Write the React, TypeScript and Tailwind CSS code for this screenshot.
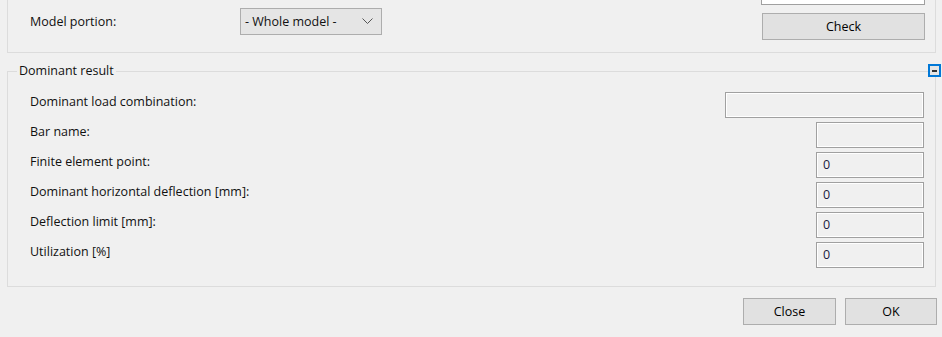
import React from 'react';

const font = { fontFamily: '"Open Sans", "Noto Sans", Arial, sans-serif' };

const Field = ({ value = '', className = '' }: { value?: string; className?: string }) => (
  <div
    className={`h-[26px] border border-[#a0a0a0] bg-[#f0f0f0] shadow-[inset_1px_1px_0_#ffffff,inset_-1px_-1px_0_#ffffff] pl-[6px] pt-[1px] flex items-center text-[#1a1a40] ${className}`}
  >
    {value}
  </div>
);

const Button = ({ children, className = '' }: { children: React.ReactNode; className?: string }) => (
  <button
    className={`h-[27px] border border-[#adadad] bg-[#e1e1e1] text-black pt-[2px] flex items-center justify-center ${className}`}
  >
    {children}
  </button>
);

const rows = [
  { label: 'Dominant load combination:', value: '', wide: true },
  { label: 'Bar name:', value: '' },
  { label: 'Finite element point:', value: '0' },
  { label: 'Dominant horizontal deflection [mm]:', value: '0' },
  { label: 'Deflection limit [mm]:', value: '0' },
  { label: 'Utilization [%]', value: '0' },
];

export default function App() {
  return (
    <div className="w-[942px] h-[337px] bg-[#f0f0f0] overflow-hidden text-[12.5px] text-[#111]" style={font}>
      {/* model portion group (top cut off) */}
      <div className="ml-[7px] w-[929px] h-[53px] border-x border-b border-[#dcdcdc] flex">
        <div className="flex items-start pt-[8px] pl-[22px]">
          <span className="w-[210px] leading-[16px] mt-[6px]">Model portion:</span>
          <div className="w-[142px] h-[27px] border border-[#adadad] bg-[#e5e5e5] flex items-center justify-between pl-[4px] pr-[8px]">
            <span className="pt-[2px]">- Whole model -</span>
            <svg width="11" height="7" viewBox="0 0 11 7" fill="none">
              <path d="M0.5 0.5 L5.5 5.5 L10.5 0.5" stroke="#555" strokeWidth="1" />
            </svg>
          </div>
        </div>
        <div className="ml-auto mr-[10px] w-[164px] flex flex-col items-end">
          <div className="w-[164px] h-[5px] border-x border-b border-[#a0a0a0] bg-white" />
          <Button className="mt-[8px] w-[163px]">Check</Button>
        </div>
      </div>

      {/* dominant result group */}
      <div className="relative mt-[18px] ml-[7px] w-[929px] h-[216px] border border-[#dcdcdc] pt-[20px] pl-[22px] pr-[11px]">
        <span className="absolute left-[9px] top-[-9px] bg-[#f0f0f0] px-[2px] leading-[16px]">Dominant result</span>
        <div className="absolute right-[-6px] top-[-8px] w-[13px] h-[13px] border-2 border-[#0078d7] bg-[#e5e5e5] flex items-center justify-center">
          <div className="w-[5px] h-[2px] bg-[#333]" />
        </div>
        <div className="flex flex-col">
          {rows.map((r) => (
            <div key={r.label} className="h-[30px] flex items-start justify-between">
              <span className="leading-[16px] mt-[2px]">{r.label}</span>
              <Field value={r.value} className={r.wide ? 'w-[199px]' : 'w-[108px]'} />
            </div>
          ))}
        </div>
      </div>

      <div className="flex justify-end gap-[9px] mt-[11px] pr-[5px]">
        <Button className="w-[93px]">Close</Button>
        <Button className="w-[92px]">OK</Button>
      </div>
    </div>
  );
}
